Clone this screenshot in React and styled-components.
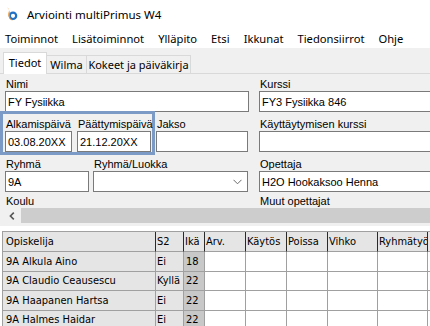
import React from "react";
import styled, { createGlobalStyle } from "styled-components";

const GlobalStyle = createGlobalStyle`
  html, body { margin: 0; padding: 0; background: #fff; overflow: hidden; }
  * { box-sizing: border-box; }
`;

const Window = styled.div`
  width: 430px;
  height: 326px;
  overflow: hidden;
  background: #fff;
  display: flex;
  flex-direction: column;
  font-family: "Liberation Sans", Arial, sans-serif;
  color: #000;
`;

const TitleBar = styled.div`
  height: 28px;
  flex: none;
  display: flex;
  align-items: center;
  gap: 9px;
  padding-left: 6px;
  font-family: "Noto Sans", sans-serif;
  font-size: 11.5px;
`;

const MenuBar = styled.div`
  height: 20px;
  flex: none;
  display: flex;
  align-items: center;
  gap: 14px;
  padding-left: 5px;
  font-family: "Noto Sans", sans-serif;
  font-size: 11.2px;
  white-space: nowrap;
`;

const MenuItem = styled.span``;

const TabStrip = styled.div`
  height: 26px;
  flex: none;
  background: #f0f0f0;
  border-bottom: 1px solid #d9d9d9;
  display: flex;
  align-items: flex-end;
  padding-left: 3px;
  font-family: "Noto Sans", sans-serif;
  font-size: 11px;
`;

const Tab = styled.div`
  width: ${(p) => p.$w}px;
  height: ${(p) => (p.$active ? 22 : 18)}px;
  margin-bottom: ${(p) => (p.$active ? -1 : 0)}px;
  padding-bottom: ${(p) => (p.$active ? 2 : 0)}px;
  background: ${(p) => (p.$active ? "#fff" : "#f0f0f0")};
  border: 1px solid #d9d9d9;
  border-bottom: none;
  margin-left: ${(p) => (p.$first ? 0 : -1)}px;
  display: flex;
  align-items: center;
  justify-content: center;
  white-space: nowrap;
  position: relative;
  z-index: ${(p) => (p.$active ? 1 : 0)};
`;

const Panel = styled.div`
  height: 152px;
  flex: none;
  background: #f0f0f0;
  display: flex;
  flex-direction: column;
`;

const FormViewport = styled.div`
  height: 134px;
  flex: none;
  overflow: hidden;
  padding: 4px 0 0 5px;
`;

const FormRow = styled.div`
  display: grid;
  grid-template-columns: 244px 200px;
  column-gap: 10px;
  margin-top: ${(p) => p.$gap || 0}px;
  height: 34px;
`;

const LeftGroup = styled.div`
  display: flex;
  align-items: flex-start;
  gap: ${(p) => p.$gap || 0}px;
`;

const Field = styled.div`
  display: flex;
  flex-direction: column;
  flex: none;
  width: ${(p) => (p.$w ? `${p.$w}px` : "auto")};
  margin-left: ${(p) => p.$ml || 0}px;
`;

const Label = styled.div`
  height: 13px;
  line-height: 13px;
  font-size: 11px;
  padding-left: 1px;
  white-space: nowrap;
`;

const Input = styled.div`
  height: 21px;
  background: #fff;
  border: 1px solid #7a7a7a;
  padding: 0 1px 0 2px;
  display: flex;
  align-items: center;
  justify-content: space-between;
  font-size: 11px;
  white-space: nowrap;
  overflow: hidden;
`;

const DateGroup = styled.div`
  display: flex;
  gap: 5px;
  width: 155px;
  flex: none;
  margin: -7px 0 -3px -5px;
  padding: 4px 1px 0 2px;
  border: 3px solid #7b9bc6;
  align-self: flex-start;
`;

const Chevron = styled.svg`
  width: 9px;
  height: 6px;
  margin-right: 4px;
  flex: none;
`;

const HScroll = styled.div`
  height: 15px;
  flex: none;
  display: flex;
  margin-left: 3px;
`;

const ScrollArrow = styled.div`
  width: 17px;
  flex: none;
  display: flex;
  align-items: center;
  justify-content: center;
  background: #f0f0f0;
`;

const ScrollThumb = styled.div`
  flex: 1;
  background: #cdcdcd;
  margin-left: 1px;
`;

const Grid = styled.div`
  margin: 5px 0 0 2px;
  border-top: 1px solid #a0a0a0;
  border-left: 1px solid #a0a0a0;
  display: grid;
  grid-template-columns: 153px 28px 21px 41px 41px 41px 50px 50px 60px;
  grid-template-rows: 20px;
  grid-auto-rows: 19.5px;
  font-family: "DejaVu Sans Condensed", "Liberation Sans", sans-serif;
  font-size: 11px;
  width: 500px;
`;

const Cell = styled.div`
  border-right: 1px solid ${(p) => (p.$head ? "#2a2a2a" : "#a0a0a0")};
  border-bottom: 1px solid #a0a0a0;
  background: ${(p) => p.$bg || "#fff"};
  padding-left: ${(p) => p.$pad ?? 1}px;
  display: flex;
  align-items: center;
  white-space: nowrap;
  overflow: hidden;
`;

const AppIcon = () => (
  <svg width="12" height="16" viewBox="0 0 12 16">
    <circle cx="7" cy="9.8" r="3.2" fill="none" stroke="#1f72c6" strokeWidth="2.2" />
    <path
      d="M1.2,1.2 C3.4,2.8 3.3,4.6 2.6,6.6 C1.6,9.6 3.2,14.4 7.2,14.8 C4.7,13.6 3.7,11.6 3.9,9.2 C4.1,7 3.6,4 1.2,1.2 Z"
      fill="#f0891c"
    />
  </svg>
);

const menus = ["Toiminnot", "Lisätoiminnot", "Ylläpito", "Etsi", "Ikkunat", "Tiedonsiirrot", "Ohje"];

const columns = [
  { t: "Opiskelija", pad: 3 },
  { t: "S2" },
  { t: "Ikä" },
  { t: "Arv." },
  { t: "Käytös" },
  { t: "Poissa" },
  { t: "Vihko" },
  { t: "Ryhmätyö" },
  { t: "" },
];

const students = [
  ["9A Alkula Aino", "Ei", "18"],
  ["9A Claudio Ceausescu", "Kyllä", "22"],
  ["9A Haapanen Hartsa", "Ei", "22"],
  ["9A Halmes Haidar", "Ei", "22"],
];

export default function App() {
  return (
    <>
      <GlobalStyle />
      <Window>
        <TitleBar>
          <AppIcon />
          <span>Arviointi multiPrimus W4</span>
        </TitleBar>
        <MenuBar>
          {menus.map((m) => (
            <MenuItem key={m}>{m}</MenuItem>
          ))}
        </MenuBar>
        <TabStrip>
          <Tab $active $first $w={44}>Tiedot</Tab>
          <Tab $w={41}>Wilma</Tab>
          <Tab $w={105}>Kokeet ja päiväkirja</Tab>
        </TabStrip>
        <Panel>
          <FormViewport>
            <FormRow>
              <Field>
                <Label>Nimi</Label>
                <Input>FY Fysiikka</Input>
              </Field>
              <Field>
                <Label>Kurssi</Label>
                <Input>FY3 Fysiikka 846</Input>
              </Field>
            </FormRow>
            <FormRow $gap={6}>
              <LeftGroup>
                <DateGroup>
                  <Field $w={67}>
                    <Label>Alkamispäivä</Label>
                    <Input>03.08.20XX</Input>
                  </Field>
                  <Field $w={74}>
                    <Label>Päättymispäivä</Label>
                    <Input>21.12.20XX</Input>
                  </Field>
                </DateGroup>
                <Field $w={92} $ml={1}>
                  <Label>Jakso</Label>
                  <Input />
                </Field>
              </LeftGroup>
              <Field>
                <Label>Käyttäytymisen kurssi</Label>
                <Input />
              </Field>
            </FormRow>
            <FormRow $gap={6}>
              <LeftGroup $gap={4}>
                <Field $w={84}>
                  <Label>Ryhmä</Label>
                  <Input>9A</Input>
                </Field>
                <Field $w={155}>
                  <Label>Ryhmä/Luokka</Label>
                  <Input>
                    <span />
                    <Chevron viewBox="0 0 9 6">
                      <path d="M0.5,0.8 L4.5,4.8 L8.5,0.8" fill="none" stroke="#6a6a6a" strokeWidth="1" />
                    </Chevron>
                  </Input>
                </Field>
              </LeftGroup>
              <Field>
                <Label>Opettaja</Label>
                <Input>H2O Hookaksoo Henna</Input>
              </Field>
            </FormRow>
            <FormRow $gap={3}>
              <Field>
                <Label>Koulu</Label>
              </Field>
              <Field>
                <Label>Muut opettajat</Label>
              </Field>
            </FormRow>
          </FormViewport>
          <HScroll>
            <ScrollArrow>
              <svg width="6" height="8" viewBox="0 0 6 8">
                <path d="M4.8,0.6 L1.4,4 L4.8,7.4" fill="none" stroke="#555" strokeWidth="1.6" />
              </svg>
            </ScrollArrow>
            <ScrollThumb />
          </HScroll>
        </Panel>
        <Grid>
          {columns.map((c, i) => (
            <Cell key={`h${i}`} $head $bg="#e5e5e5" $pad={c.pad}>
              {c.t}
            </Cell>
          ))}
          {students.map((s) => (
            <React.Fragment key={s[0]}>
              <Cell $bg="#e5e5e5" $pad={3}>{s[0]}</Cell>
              <Cell $bg="#e5e5e5">{s[1]}</Cell>
              <Cell $bg="#c8c8c8" $pad={2}>{s[2]}</Cell>
              <Cell />
              <Cell />
              <Cell />
              <Cell />
              <Cell />
              <Cell />
            </React.Fragment>
          ))}
        </Grid>
      </Window>
    </>
  );
}
